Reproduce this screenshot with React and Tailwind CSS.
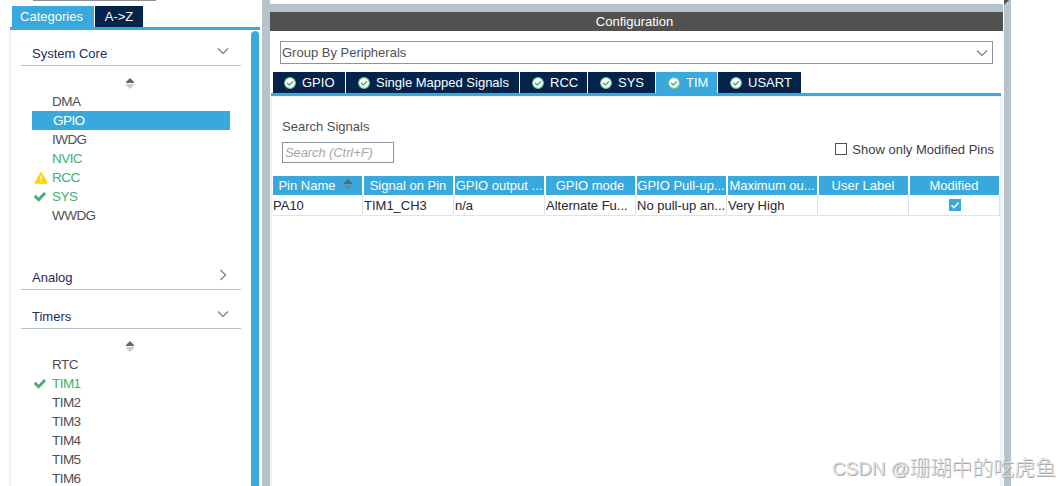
const systemCore = [
  { name: 'DMA' },
  { name: 'GPIO', selected: true },
  { name: 'IWDG' },
  { name: 'NVIC', enabled: true },
  { name: 'RCC', enabled: true, icon: 'warning' },
  { name: 'SYS', enabled: true, icon: 'check' },
  { name: 'WWDG' },
]

const timers = [
  { name: 'RTC' },
  { name: 'TIM1', enabled: true, icon: 'check' },
  { name: 'TIM2' },
  { name: 'TIM3' },
  { name: 'TIM4' },
  { name: 'TIM5' },
  { name: 'TIM6' },
]

const tabs = [
  { name: 'GPIO', width: 'w-[72px] pl-[11px]' },
  { name: 'Single Mapped Signals', width: 'w-[173px] pl-3' },
  { name: 'RCC', width: 'w-[67px] pl-3' },
  { name: 'SYS', width: 'w-[67px] pl-3' },
  { name: 'TIM', width: 'w-[61px] pl-3', active: true },
  { name: 'USART', width: 'w-[83px] pl-3' },
]

const columns = [
  { title: 'Pin Name', value: 'PA10', sorted: true },
  { title: 'Signal on Pin', value: 'TIM1_CH3' },
  { title: 'GPIO output ...', value: 'n/a' },
  { title: 'GPIO mode', value: 'Alternate Fu...' },
  { title: 'GPIO Pull-up...', value: 'No pull-up an...' },
  { title: 'Maximum ou...', value: 'Very High' },
  { title: 'User Label', value: '' },
  { title: 'Modified', checkbox: true },
]

const Chevron = ({ right, className = '' }) => (
  <svg width="12" height="12" viewBox="0 0 12 12" fill="none" stroke="#7c7c7c" strokeWidth="1.2" className={className}>
    <path d={right ? 'M3.5 1 L8.5 6 L3.5 11' : 'M1 3.5 L6 8.5 L11 3.5'} />
  </svg>
)

const SortIcon = ({ onBlue }) => (
  <svg width="8" height="11" viewBox="0 0 8 11" className="shrink-0">
    <path d="M4 0 L8 4 V5 H0 V4 Z" fill="#666666" />
    <path d="M0 6 H8 V7 L4 11 L0 7 Z" fill={onBlue ? '#5592b3' : '#cccccc'} />
  </svg>
)

const StatusIcon = ({ type }) => {
  if (type === 'warning') {
    return (
      <svg width="14" height="12" viewBox="0 0 14 12">
        <path d="M7 1 L12.7 11 H1.3 Z" fill="#ffd20a" stroke="#ffd20a" strokeWidth="1.6" strokeLinejoin="round" />
        <path d="M7 3.5 V7.5 M7 8.7 V10" stroke="#fff" strokeWidth="1.2" />
      </svg>
    )
  }
  return (
    <svg width="14" height="12" viewBox="0 0 14 12" fill="none">
      <path d="M0.8 4.9 L4.7 8.7 L11 2" stroke="#45ae72" strokeWidth="2.9" />
    </svg>
  )
}

const TabIcon = () => (
  <svg width="12" height="12" viewBox="0 0 12 12" fill="none" className="shrink-0">
    <circle cx="6" cy="6" r="5.4" fill="#fff" stroke="#72c394" strokeWidth="1.1" />
    <path d="M3 5.8 L5.3 8 L9 4.2" stroke="#45ae72" strokeWidth="1.3" />
  </svg>
)

const SectionHeader = ({ title, collapsed }) => (
  <div className="flex h-[26px] w-[220px] items-center justify-between border-b border-[#b7c3ca] pl-[11px] pr-3 text-[#1c2a5e]">
    <span className="pt-0.5">{title}</span>
    <Chevron right={collapsed} className="mb-[3px]" />
  </div>
)

const ItemList = ({ items }) => (
  <div className="pl-[11px]">
    <div className="flex h-[26px] items-start pl-[94px] pt-3">
      <SortIcon />
    </div>
    {items.map((item) => (
      <div
        key={item.name}
        className={`flex h-[19px] w-[198px] items-center text-[13.5px] tracking-[-0.55px] ${
          item.selected ? 'bg-[#39a8dc] pl-px text-white' : item.enabled ? 'text-[#45ae72]' : 'text-[#505050]'
        }`}
      >
        <div className="w-5 shrink-0 pl-0.5">{item.icon && <StatusIcon type={item.icon} />}</div>
        {item.name}
      </div>
    ))}
  </div>
)

const Sidebar = () => (
  <aside className="flex h-full w-[262px] shrink-0 flex-col">
    <div className="ml-[33px] h-1.5 w-[123px] shrink-0 border-t border-[#8a9096]" />
    <div className="flex h-[21px] shrink-0 gap-px pl-3 text-white">
      <div className="flex w-[82px] items-center justify-center bg-[#39a8dc] pr-[3px]">Categories</div>
      <div className="flex w-12 items-center justify-center bg-[#03234b]">A-&gt;Z</div>
    </div>
    <div className="ml-2.5 h-[3px] w-[250px] shrink-0 bg-[#39a8dc]" />
    <div className="ml-[9px] flex min-h-0 grow justify-between overflow-hidden border-l-2 border-[#f0f0f0] pr-0.5">
      <div className="pl-2.5 pt-2.5">
        <SectionHeader title="System Core" />
        <ItemList items={systemCore} />
        <div className="h-[39px]" />
        <SectionHeader title="Analog" collapsed />
        <div className="h-[13px]" />
        <SectionHeader title="Timers" />
        <ItemList items={timers} />
      </div>
      <div className="mt-px h-[480px] w-[9px] rounded-t-md border-r border-[#f0f0f0] bg-[#39a8dc]" />
    </div>
  </aside>
)

const SignalTable = () => (
  <div className="flex pl-px">
    {columns.map((col) => (
      <div key={col.title} className="w-[91px] shrink-0">
        <div className="mr-0.5 flex h-[19px] items-center justify-center gap-2 overflow-hidden whitespace-nowrap bg-[#39a8dc] pr-px text-white">
          {col.title}
          {col.sorted && (
            <div className="mb-[3px] mr-1">
              <SortIcon onBlue />
            </div>
          )}
        </div>
        <div className="mr-px flex h-[21px] items-center overflow-hidden whitespace-nowrap border-b border-r border-[#dfe2e6] text-[#26262c]">
          {col.checkbox ? (
            <svg width="12" height="12" viewBox="0 0 12 12" fill="none" className="mx-auto">
              <rect width="12" height="12" fill="#39a8dc" />
              <path d="M2.5 6.2 L5 8.7 L9.7 3.5" stroke="#fff" strokeWidth="1.5" />
            </svg>
          ) : (
            col.value
          )}
        </div>
      </div>
    ))}
  </div>
)

const Configuration = () => (
  <main className="flex h-full w-[733px] shrink-0 flex-col">
    <div className="-ml-px mt-1 h-2 shrink-0 bg-[#b7c3ca]" />
    <div className="flex h-[19px] shrink-0 items-center justify-center bg-[#515250] pr-1 text-white">Configuration</div>
    <div className="ml-2.5 mt-2.5 flex h-[23px] w-[713px] shrink-0 items-center justify-between border border-[#8c949e] pl-px pr-1 text-[#505050]">
      Group By Peripherals
      <Chevron />
    </div>
    <div className="mt-2 flex h-[21px] shrink-0 gap-px pl-[3px] text-white">
      {tabs.map((tab) => (
        <div
          key={tab.name}
          className={`flex shrink-0 items-center gap-1.5 whitespace-nowrap ${tab.width} ${tab.active ? 'bg-[#39a8dc]' : 'bg-[#03234b]'}`}
        >
          <TabIcon />
          {tab.name}
        </div>
      ))}
    </div>
    <div className="ml-px h-[3px] w-[730px] shrink-0 bg-[#39a8dc]" />
    <div className="grow border-l-2 border-r-[3px] border-t border-[#f0f2f3]">
      <div className="flex h-[79px] justify-between pl-2.5 pr-1.5 pt-[21px]">
        <div className="text-[#505050]">
          <div className="h-6 leading-[17px]">Search Signals</div>
          <div className="flex h-[21px] w-28 items-center border border-[#8c949e] pl-0.5 italic tracking-[-0.1px] text-[#a8a8a8]">
            Search (Ctrl+F)
          </div>
        </div>
        <label className="mt-[21px] flex h-5 items-center gap-[5px] text-[#3c3c46]">
          <span className="h-3 w-3 border border-[#505050]" />
          Show only Modified Pins
        </label>
      </div>
      <SignalTable />
    </div>
  </main>
)

const App = () => (
  <div className="relative flex h-[486px] w-[1060px] overflow-hidden bg-white font-['Liberation_Sans',Arial,sans-serif] text-[13px] leading-[15px]">
    <Sidebar />
    <div className="h-full w-2 shrink-0 bg-[#b7c3ca]" />
    <Configuration />
    <div className="ml-px h-full w-[7px] shrink-0 bg-[#b7c3ca]">
      <svg width="5" height="5" viewBox="0 0 5 5">
        <path d="M0 0 H5 L0 5 Z" fill="#515250" />
      </svg>
    </div>
    <div className="absolute left-[832px] top-[453px] whitespace-nowrap font-['Liberation_Sans','Noto_Sans_CJK_SC',sans-serif] leading-[30px] text-[#dedede] [text-shadow:1px_1px_0_#a9a9a9]">
      <span className="text-[18.8px]">CSDN @</span>
      <span className="text-[20.9px] font-light">珊瑚中的吃虎鱼</span>
    </div>
  </div>
)

export default App
